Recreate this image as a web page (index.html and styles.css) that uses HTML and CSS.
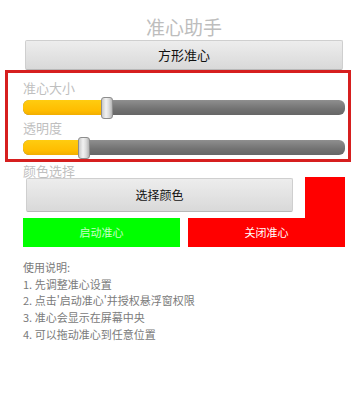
FILE: index.html
```html
<!DOCTYPE html>
<html lang="zh">
<head>
<meta charset="utf-8">
<link rel="stylesheet" href="styles.css">
</head>
<body>
<div class="page">
  <div class="title">准心助手</div>
  <div class="btn btn-shape">方形准心</div>

  <div class="label label-first">准心大小</div>
  <div class="slider"><div class="track"><div class="fill" style="width:84px"></div></div><div class="thumb" style="left:78px"></div></div>

  <div class="label">透明度</div>
  <div class="slider"><div class="track"><div class="fill" style="width:61px"></div></div><div class="thumb" style="left:55px"></div></div>

  <div class="label label-color">颜色选择</div>
  <div class="color-grid">
    <div class="btn btn-pick">选择颜色</div>
    <div class="preview"></div>
    <div class="act act-start">启动准心</div>
    <div class="act act-stop">关闭准心</div>
  </div>

  <div class="help">
    <div>使用说明:</div>
    <div>1. 先调整准心设置</div>
    <div>2. 点击'启动准心'并授权悬浮窗权限</div>
    <div>3. 准心会显示在屏幕中央</div>
    <div>4. 可以拖动准心到任意位置</div>
  </div>
</div>
<div class="frame"></div>
</body>
</html>
```
FILE: styles.css
```css
html, body {
  margin: 0;
  padding: 0;
  background: #ffffff;
}
body {
  width: 359px;
  height: 397px;
  overflow: hidden;
  position: relative;
  font-family: "Noto Sans CJK SC", "Noto Sans", Roboto, sans-serif;
}
.page {
  padding: 15px 14px 0 23px;
  width: 322px;
}
.title {
  height: 25px;
  line-height: 24px;
  font-size: 19px;
  color: #bdbdbd;
  text-align: center;
}
.btn {
  box-sizing: border-box;
  background: linear-gradient(#ededed, #d9d9d9);
  border: 1px solid #cfcfcf;
  border-bottom-color: #b8b8b8;
  border-radius: 2px;
  color: #111;
  text-align: center;
}
.btn-shape {
  margin: 0 2px;
  height: 30px;
  line-height: 28px;
  font-size: 13px;
}
.label {
  font-size: 13px;
  line-height: 16px;
  height: 16px;
  color: #bfbfbf;
  margin-top: 1px;
}
.label-first {
  margin-top: 10px;
}
.slider {
  position: relative;
  height: 22px;
  margin-top: 1px;
}
.track {
  position: absolute;
  left: 0;
  right: 0;
  top: 3px;
  height: 15px;
  border-radius: 6px;
  background: linear-gradient(#8f8f8f, #727272 60%, #666);
  overflow: hidden;
}
.fill {
  height: 100%;
  background: linear-gradient(#ffcc10, #ffbd00 70%, #f2ae00);
}
.thumb {
  position: absolute;
  top: 0;
  width: 12px;
  height: 22px;
  box-sizing: border-box;
  border: 1px solid #8d8d8d;
  border-radius: 3px;
  background: linear-gradient(90deg, #c9c9c9, #f2f2f2 40%, #dcdcdc 70%, #b5b5b5);
}
.label-color {
  margin-top: 4px;
  height: 14px;
  line-height: 15px;
}
.color-grid {
  display: grid;
  grid-template-columns: 157px 125px 40px;
  grid-template-rows: 41px 29px;
}
.btn-pick {
  grid-column: 1 / 3;
  grid-row: 1;
  margin: 1px 12px 6px 3px;
  height: 34px;
  line-height: 32px;
  font-size: 12px;
}
.preview {
  grid-column: 3;
  grid-row: 1 / 3;
  background: #ff0000;
}
.act {
  grid-row: 2;
  font-size: 11px;
  line-height: 29px;
  text-align: center;
}
.act-start {
  grid-column: 1;
  background: #00ff00;
  color: #c8ffc8;
}
.act-stop {
  grid-column: 2 / 4;
  margin-left: 8px;
  background: #ff0000;
  color: #ffffff;
}
.help {
  margin-top: 12px;
  font-size: 11px;
  line-height: 16.7px;
  color: #7a7a7a;
}
.frame {
  position: absolute;
  left: 5px;
  top: 70px;
  width: 340px;
  height: 86px;
  border: 3px solid #d61f1f;
}
```
